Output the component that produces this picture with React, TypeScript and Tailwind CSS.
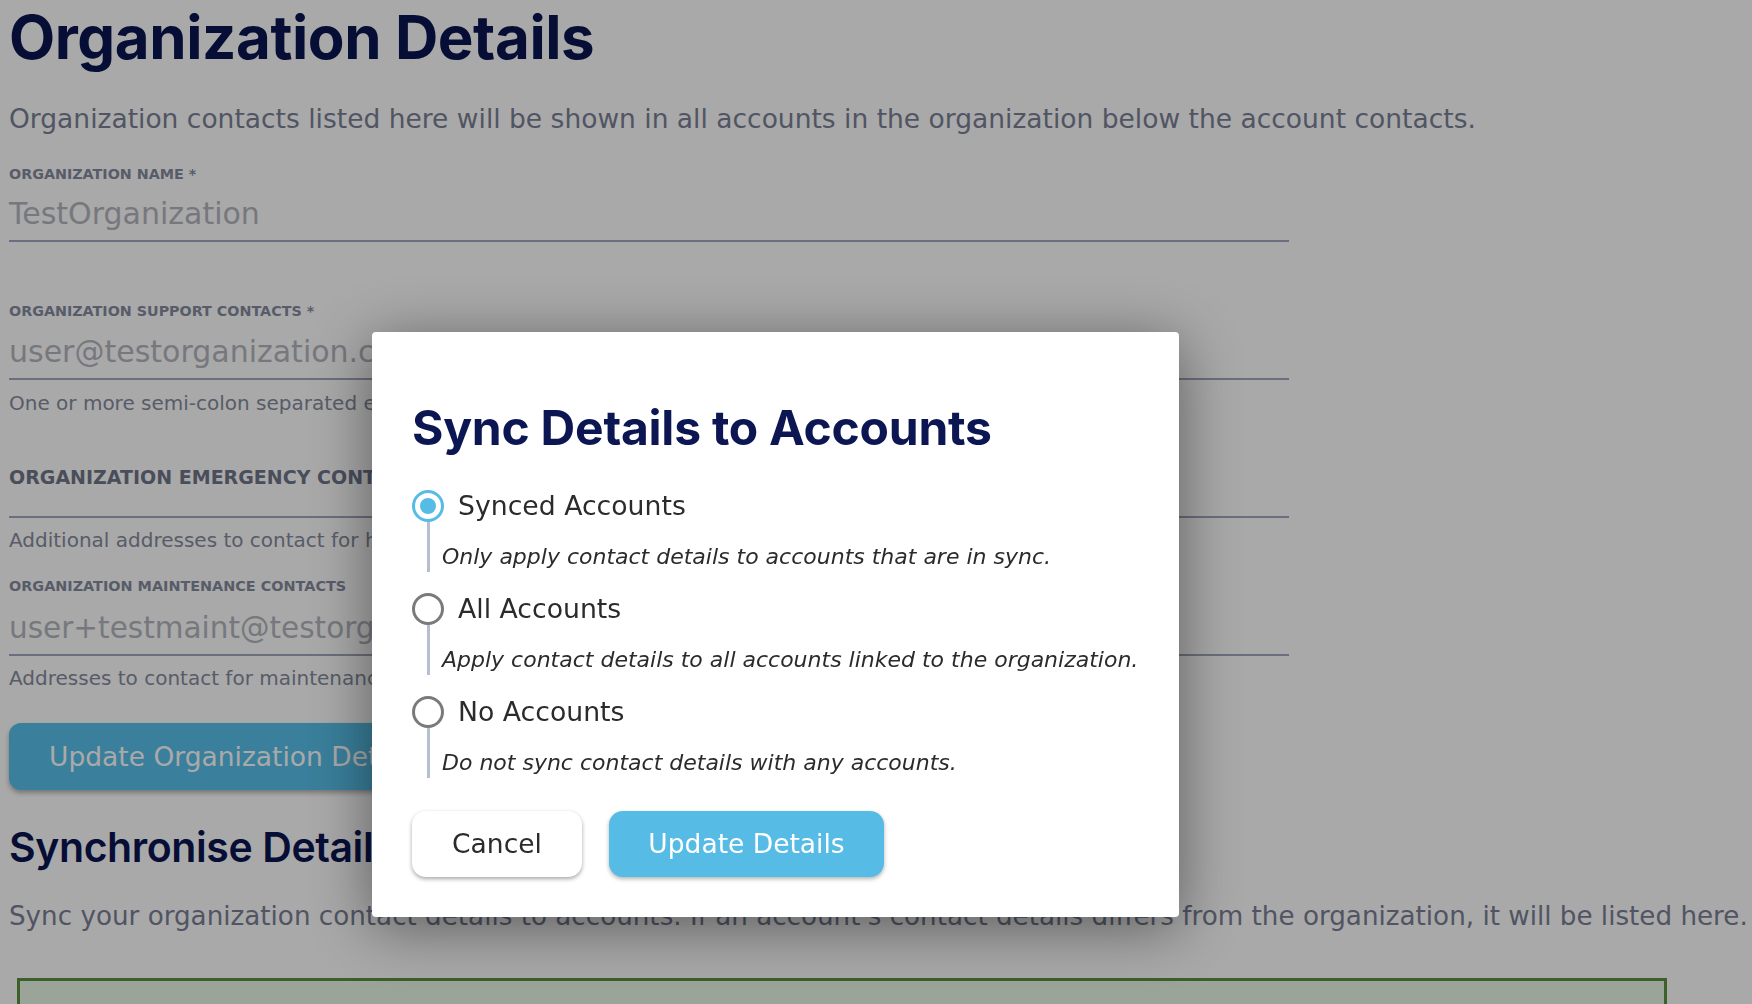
import React from "react";

const BODY = { fontFamily: "'DejaVu Sans', 'Noto Sans', sans-serif" };
const HEAD = { fontFamily: "Inter, 'Noto Sans', sans-serif" };

function Radio({ checked }: { checked: boolean }) {
  return checked ? (
    <div className="w-[32px] h-[32px] rounded-full border-[3px] border-[#56bce6] flex items-center justify-center shrink-0">
      <div className="w-[16px] h-[16px] rounded-full bg-[#56bce6]" />
    </div>
  ) : (
    <div className="w-[32px] h-[32px] rounded-full border-[3px] border-[#7a7a7a] shrink-0" />
  );
}

function Option({ checked, label, desc }: { checked: boolean; label: string; desc: string }) {
  return (
    <div className="flex flex-col">
      <div className="flex items-center gap-[14px] h-[32px]">
        <Radio checked={checked} />
        <span className="text-[26.7px] leading-[32px] text-[#2b2b2b] whitespace-nowrap">{label}</span>
      </div>
      <div className="flex h-[50px]">
        <div className="ml-[15px] w-[3px] h-full bg-[#b6bed2]" />
        <p className="ml-[12px] self-end text-[22px] leading-[30px] italic text-[#2b2b2b] whitespace-nowrap">{desc}</p>
      </div>
    </div>
  );
}

export default function App() {
  return (
    <div style={BODY} className="relative w-full h-screen overflow-hidden bg-white">
      <div className="pl-[9px] pt-[2px] flex flex-col">
        <h1 style={HEAD} className="text-[60px] leading-[70px] font-bold tracking-[-0.007em] text-[#0c1652] whitespace-nowrap">
          Organization Details
        </h1>
        <p className="mt-[32px] text-[26.5px] leading-[30px] text-[#7a8196] whitespace-nowrap">
          Organization contacts listed here will be shown in all accounts in the organization below the account contacts.
        </p>

        <label className="mt-[30px] text-[14.3px] leading-[20px] font-bold uppercase text-[#858b9f] whitespace-nowrap">
          Organization Name *
        </label>
        <div className="mt-[12px] w-[1280px] pb-[8px] border-b-2 border-[#a2a8bd]">
          <div className="text-[30px] leading-[36px] text-[#b3b6be]">TestOrganization</div>
        </div>

        <label className="mt-[59px] text-[14.3px] leading-[20px] font-bold uppercase text-[#858b9f] whitespace-nowrap">
          Organization Support Contacts *
        </label>
        <div className="mt-[13px] w-[1280px] pb-[8px] border-b-2 border-[#a2a8bd]">
          <div className="text-[30px] leading-[36px] text-[#b3b6be] whitespace-nowrap">user@testorganization.com</div>
        </div>
        <p className="mt-[10px] text-[20px] leading-[26px] text-[#858b9d] whitespace-nowrap">
          One or more semi-colon separated email addresses.
        </p>

        <label className="mt-[47px] text-[19px] leading-[28px] font-bold uppercase text-[#70768a] whitespace-nowrap">
          Organization Emergency Contacts
        </label>
        <div className="w-[1280px] h-[27px] border-b-2 border-[#a2a8bd]" />
        <p className="mt-[9px] text-[20px] leading-[26px] text-[#858b9d] whitespace-nowrap">
          Additional addresses to contact for high priority issues.
        </p>

        <label className="mt-[23px] text-[14.4px] leading-[20px] font-bold uppercase text-[#858b9f] whitespace-nowrap">
          Organization Maintenance Contacts
        </label>
        <div className="mt-[10px] w-[1280px] pb-[12px] border-b-2 border-[#a2a8bd]">
          <div className="pt-[4px] h-[36px] text-[29.5px] leading-[36px] text-[#b3b6be] whitespace-nowrap">user+testmaint@testorganization.com</div>
        </div>
        <p className="mt-[9px] text-[20px] leading-[26px] text-[#858b9d] whitespace-nowrap">
          Addresses to contact for maintenance notifications.
        </p>

        <button className="mt-[32px] self-start h-[67px] px-[40px] rounded-[12px] bg-[#58c0ea] text-white text-[26.5px] shadow-[0_3px_5px_rgba(0,0,0,0.3)] whitespace-nowrap">
          Update Organization Details
        </button>

        <h2 style={HEAD} className="mt-[33px] text-[41px] leading-[48px] font-semibold tracking-[-0.01em] text-[#0c1652] whitespace-nowrap">
          Synchronise Details
        </h2>
        <p className="mt-[30px] text-[26.2px] leading-[30px] text-[#7a8196] whitespace-nowrap">
          Sync your organization contact details to accounts. If an account's contact details differs from the organization, it will be listed here.
        </p>

        <div className="mt-[47px] ml-[8px] w-[1650px] h-[120px] border-[3px] border-[#5b9140] bg-[#e8f8e6]" />
      </div>

      <div className="fixed inset-0 bg-black/[0.337]" />

      <div className="absolute left-[372px] top-[332px] w-[807px] bg-white rounded-[4px] shadow-[0_10px_60px_rgba(0,0,0,0.45)] pl-[40px] pr-[30px] pt-[68px] pb-[40px]">
        <h2 style={HEAD} className="text-[48px] leading-[56px] font-bold tracking-[-0.005em] text-[#0c1652] whitespace-nowrap">
          Sync Details to Accounts
        </h2>
        <div className="mt-[34px] flex flex-col gap-[21px]">
          <Option checked label="Synced Accounts" desc="Only apply contact details to accounts that are in sync." />
          <Option checked={false} label="All Accounts" desc="Apply contact details to all accounts linked to the organization." />
          <Option checked={false} label="No Accounts" desc="Do not sync contact details with any accounts." />
        </div>
        <div className="mt-[33px] flex gap-[27px]">
          <button className="w-[170px] h-[66px] rounded-[14px] bg-white text-[26.5px] text-[#2b2b2b] shadow-[0_2px_4px_rgba(0,0,0,0.35)]">
            Cancel
          </button>
          <button className="w-[275px] h-[66px] rounded-[14px] bg-[#56bce6] text-[26.5px] text-white shadow-[0_2px_4px_rgba(0,0,0,0.3)]">
            Update Details
          </button>
        </div>
      </div>
    </div>
  );
}
